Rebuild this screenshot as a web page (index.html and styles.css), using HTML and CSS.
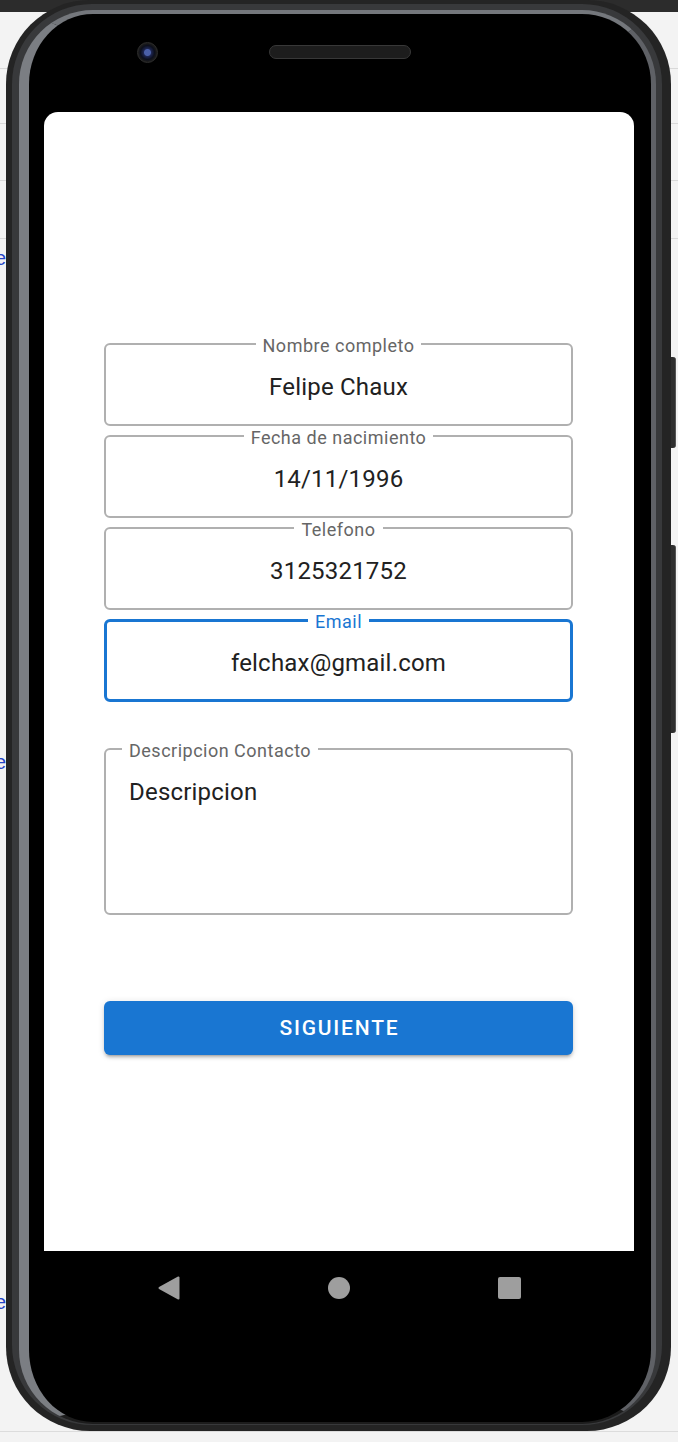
FILE: index.html
```html
<!DOCTYPE html>
<html lang="es">
<head>
<meta charset="utf-8">
<title>Formulario de contacto</title>
<link rel="stylesheet" href="styles.css">
</head>
<body>
<div class="page">
  <div class="gutter" aria-hidden="true">
    <span class="ghost g1">e</span>
    <span class="ghost g2">e</span>
    <span class="ghost g3">e</span>
  </div>
  <div class="device">
    <div class="rim">
      <div class="bezel">
        <div class="top-bezel">
          <span class="camera"></span>
          <span class="speaker"></span>
        </div>
        <main class="screen">
          <form class="form">
            <fieldset class="field">
              <legend class="label">Nombre completo</legend>
              <div class="value">Felipe Chaux</div>
            </fieldset>
            <fieldset class="field">
              <legend class="label">Fecha de nacimiento</legend>
              <div class="value">14/11/1996</div>
            </fieldset>
            <fieldset class="field">
              <legend class="label">Telefono</legend>
              <div class="value">3125321752</div>
            </fieldset>
            <fieldset class="field field-focused">
              <legend class="label">Email</legend>
              <div class="value">felchax@gmail.com</div>
            </fieldset>
            <fieldset class="field field-multiline">
              <legend class="label">Descripcion Contacto</legend>
              <div class="value">Descripcion</div>
            </fieldset>
            <button type="button" class="btn">Siguiente</button>
          </form>
        </main>
        <nav class="navbar">
          <svg class="nav-back" width="22" height="24" viewBox="0 0 22 24"><path d="M20.5 1.5 L20.5 22.5 L1.5 12 Z" fill="#9e9e9e" stroke="#9e9e9e" stroke-width="2" stroke-linejoin="round"/></svg>
          <span class="nav-home"></span>
          <span class="nav-recent"></span>
        </nav>
      </div>
    </div>
  </div>
  <div class="side-buttons">
    <span class="side-btn vol"></span>
    <span class="side-btn power"></span>
  </div>
</div>
</body>
</html>
```

FILE: styles.css
```css
* { box-sizing: border-box; }
html, body { margin: 0; padding: 0; }
body {
  width: 678px;
  height: 1442px;
  overflow: hidden;
  font-family: Roboto, "Noto Sans", sans-serif;
  background:
    linear-gradient(#2c2c2c, #2c2c2c) 0 0 / 100% 12px no-repeat,
    linear-gradient(#d9d9d9, #d9d9d9) 0 68px / 100% 1px no-repeat,
    linear-gradient(#d9d9d9, #d9d9d9) 0 123px / 100% 1px no-repeat,
    linear-gradient(#d9d9d9, #d9d9d9) 0 180px / 100% 1px no-repeat,
    linear-gradient(#d9d9d9, #d9d9d9) 0 238px / 100% 1px no-repeat,
    linear-gradient(#dcdcdc, #dcdcdc) 0 1431px / 100% 1px no-repeat,
    #f3f3f3;
}
.page { display: flex; align-items: flex-start; }

.gutter { width: 6px; flex: none; overflow: hidden; display: flex; flex-direction: column; }
.ghost { display: block; margin-left: -5px; font: 20px/20px "Liberation Sans", sans-serif; color: #2446c6; }
.g1 { margin-top: 248px; }
.g2 { margin-top: 484px; }
.g3 { margin-top: 520px; }

.device {
  flex: none;
  width: 665px;
  height: 1431px;
  border-radius: 84px;
  background: #242424;
  padding: 4px 9px 6px 6px;
}
.rim {
  height: 100%;
  border-radius: 80px;
  background: #38393b;
  padding: 6px 6px 1px 7px;
}
.bezel {
  height: 100%;
  border-radius: 74px;
  background: #000;
  border-style: solid;
  border-color: #74777c #5f6166 #1c1c1c #7b7e83;
  border-width: 4px 5px 2px 10px;
  display: flex;
  flex-direction: column;
}
.top-bezel {
  flex: none;
  height: 98px;
  display: flex;
  align-items: flex-start;
  padding: 28px 0 0 108px;
}
.camera {
  width: 21px; height: 21px;
  border-radius: 50%;
  background: radial-gradient(circle at 50% 50%, #4a5fa8 0 3px, #1d2550 4px, #0c0f1c 7px, #1b1b1b 9px);
  border: 1px solid #2e2e2e;
}
.speaker {
  width: 142px; height: 14px;
  margin: 3px 0 0 111px;
  border-radius: 7px;
  background: #1d1d1d;
  border: 1px solid #383838;
}

.screen {
  flex: none;
  height: 1139px;
  margin: 0 17px 0 15px;
  background: #fff;
  border-radius: 14px 14px 0 0;
  padding: 222px 61px 0 60px;
}
.form { display: flex; flex-direction: column; }

.field {
  margin: 0;
  padding: 0;
  min-width: 0;
  height: 92px;
  border: 2px solid #b0b0b0;
  border-radius: 6px;
}
.label {
  margin: 0 auto;
  padding: 4px 7px 0;
  font-size: 18px;
  line-height: 16px;
  letter-spacing: 0.5px;
  color: #666;
}
.value {
  padding-top: 19px;
  font-size: 24px;
  line-height: 28px;
  color: #212121;
  text-align: center;
  letter-spacing: 0.2px;
}
.field-focused { border: 3px solid #1976d2; }
.field-focused .label { color: #1976d2; }

.field-multiline { height: 176px; margin-top: 37px; }
.field-multiline .label { margin: 0 0 0 16px; }
.field-multiline .value { text-align: left; padding-left: 23px; }

.btn {
  margin-top: 86px;
  height: 54px;
  border: none;
  border-radius: 6px;
  background: #1976d2;
  color: #fff;
  font-family: Roboto, sans-serif;
  font-weight: 500;
  font-size: 21px;
  letter-spacing: 1.8px;
  text-indent: 1.8px;
  text-transform: uppercase;
  box-shadow: 0 4px 2px -3px rgba(0,0,0,0.2), 0 3px 3px rgba(0,0,0,0.14), 0 1px 7px rgba(0,0,0,0.12);
}

.navbar {
  flex: none;
  height: 74px;
  margin: 0 17px 0 15px;
  display: flex;
  align-items: center;
  justify-content: center;
  gap: 148px;
}
.nav-back { display: block; }
.nav-home { width: 22px; height: 22px; border-radius: 50%; background: #9e9e9e; }
.nav-recent { width: 23px; height: 22px; border-radius: 2px; background: #9e9e9e; }

.side-buttons { flex: none; display: flex; flex-direction: column; }
.side-btn { width: 5px; background: #2e2e2e; border-radius: 0 3px 3px 0; border-right: 1px solid #555; }
.vol { margin-top: 357px; height: 91px; }
.power { margin-top: 97px; height: 188px; }
```
